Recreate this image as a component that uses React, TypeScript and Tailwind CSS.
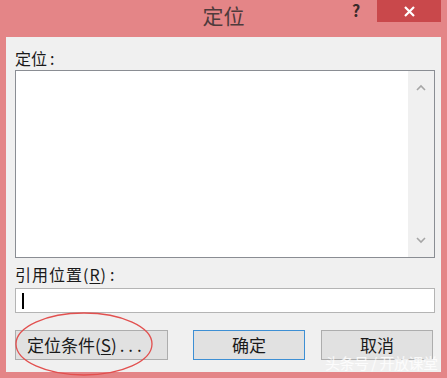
import React from 'react';

const font = { fontFamily: '"Microsoft YaHei", "Noto Sans CJK SC", "Noto Sans", sans-serif' };

const Chevron: React.FC<{ up?: boolean }> = ({ up }) => (
  <svg width="10" height="7" viewBox="0 0 10 7" className="block">
    <path
      d={up ? 'M1 6 L5 2 L9 6' : 'M1 1 L5 5 L9 1'}
      fill="none"
      stroke="#a6a6a6"
      strokeWidth="1.6"
    />
  </svg>
);

const App: React.FC = () => {
  return (
    <div className="relative w-[447px] h-[378px] bg-[#e48587] flex flex-col overflow-hidden" style={font}>
      {/* title bar */}
      <div className="relative h-[37px] flex items-start justify-center shrink-0">
        <span className="mt-[1px] text-[21px] leading-[28px] text-[#4e3b3c]">定位</span>
        <span className="absolute left-[352px] top-0 text-[16px] leading-[20px] font-bold text-[#3a2a2a]">?</span>
        <div className="absolute left-[377px] top-0 w-[64px] h-[22px] bg-[#c9484b] flex items-center justify-center">
          <svg width="11" height="11" viewBox="0 0 11 11">
            <path d="M1 1 L10 10 M10 1 L1 10" stroke="#fff" strokeWidth="2.2" />
          </svg>
        </div>
      </div>

      {/* client area */}
      <div className="mx-[6px] mb-[6px] flex-1 bg-[#f0f0f0] pl-[9px] pr-[6px] pt-[8px] flex flex-col">
        <div className="h-[25px] flex items-center text-[16px] text-[#1a1a1a]">
          定位<span className="ml-[3px]">:</span>
        </div>
        <div className="h-[188px] border border-[#8a8d93] bg-white flex justify-end">
          <div className="w-[26px] bg-[#f0f0f0] flex flex-col items-center justify-between py-[13px]">
            <Chevron up />
            <Chevron />
          </div>
        </div>
        <div className="h-[30px] flex items-center pt-[2px] text-[16px] text-[#1a1a1a] tracking-[1px]">
          引用位置(<span className="underline underline-offset-2">R</span>)<span className="ml-[3px]">:</span>
        </div>
        <div className="h-[25px] border border-[#b4b4b4] bg-white flex items-center pl-[6px]">
          <div className="w-[1.5px] h-[16px] bg-black" />
        </div>
        <div className="mt-[17px] flex items-center">
          <button className="w-[153px] h-[30px] border border-[#adadad] bg-[#e1e1e1] text-[17px] text-[#1a1a1a] flex items-center justify-start pl-[11px]">
            定位条件(<span className="underline underline-offset-2">S</span>)<span className="ml-[3px] tracking-[4px]">...</span>
          </button>
          <button className="ml-[25px] w-[112px] h-[30px] border border-[#3d8fd4] bg-[#e1e1e1] text-[17px] text-[#1a1a1a] flex items-center justify-center">
            确定
          </button>
          <button className="ml-[16px] w-[112px] h-[30px] border border-[#adadad] bg-[#e1e1e1] text-[17px] text-[#1a1a1a] flex items-center justify-center">
            取消
          </button>
        </div>
      </div>

      {/* red annotation ellipse */}
      <svg className="absolute left-0 top-0 pointer-events-none" width="447" height="378">
        <ellipse cx="84" cy="344" rx="68" ry="31" fill="none" stroke="#e2504f" strokeWidth="1.3" />
      </svg>

      {/* watermark */}
      <span className="absolute left-[325px] top-[352px] text-[15px] leading-[22px] text-white/80 tracking-[-0.5px]">
        头条号 / 开放课堂
      </span>
    </div>
  );
};

export default App;
